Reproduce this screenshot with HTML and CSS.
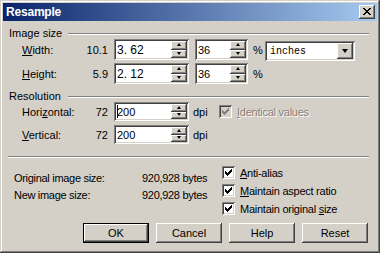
FILE: index.html
```html
<!DOCTYPE html>
<html>
<head>
<meta charset="utf-8">
<title>Resample</title>
<link rel="stylesheet" href="styles.css">
</head>
<body>
<div class="window">
  <div class="titlebar">
    <span class="title">Resample</span>
    <span class="close">
      <svg width="8" height="7" viewBox="0 0 8 7" shape-rendering="crispEdges"><path d="M0 0h2v1h-2z M6 0h2v1h-2z M1 1h2v1h-2z M5 1h2v1h-2z M2 2h4v1h-4z M3 3h2v1h-2z M2 4h4v1h-4z M1 5h2v1h-2z M5 5h2v1h-2z M0 6h2v1h-2z M6 6h2v1h-2z" fill="#000"/></svg>
    </span>
  </div>
  <div class="content">
    <div class="group-head"><span class="gh-text">Image size</span><span class="rule"></span></div>
    <div class="row">
      <span class="lbl"><u>W</u>idth:</span><span class="val">10.1</span>
      <div class="field spin wide"><span class="txt big">3. 62</span><span class="spinbtns"><span class="sb"><span class="arr-up"></span></span><span class="sb"><span class="arr-down"></span></span></span></div>
      <div class="field spin pct"><span class="txt">36</span><span class="spinbtns"><span class="sb"><span class="arr-up"></span></span><span class="sb"><span class="arr-down"></span></span></span></div>
      <span class="unit">%</span>
      <div class="field combo"><span class="txt mono">inches</span><span class="combobtn"><span class="arr-combo"></span></span></div>
    </div>
    <div class="row row2">
      <span class="lbl"><u>H</u>eight:</span><span class="val">5.9</span>
      <div class="field spin wide"><span class="txt big">2. 12</span><span class="spinbtns"><span class="sb"><span class="arr-up"></span></span><span class="sb"><span class="arr-down"></span></span></span></div>
      <div class="field spin pct"><span class="txt">36</span><span class="spinbtns"><span class="sb"><span class="arr-up"></span></span><span class="sb"><span class="arr-down"></span></span></span></div>
      <span class="unit">%</span>
    </div>
    <div class="group-head gh2"><span class="gh-text">Resolution</span><span class="rule"></span></div>
    <div class="row res">
      <span class="lbl">Hori<u>z</u>ontal:</span><span class="val">72</span>
      <div class="field spin wide res-field"><span class="txt"><span class="caret"></span>200</span><span class="spinbtns"><span class="sb"><span class="arr-up"></span></span><span class="sb"><span class="arr-down"></span></span></span></div>
      <span class="dpi">dpi</span>
      <span class="check disabled"><svg width="7" height="7" viewBox="0 0 7 7" shape-rendering="crispEdges"><path d="M0 2h1v3h-1z M1 3h1v3h-1z M2 4h1v3h-1z M3 3h1v3h-1z M4 2h1v3h-1z M5 1h1v3h-1z M6 0h1v3h-1z" fill="#808080"/></svg></span>
      <span class="cblabel dis-text"><u>I</u>dentical values</span>
    </div>
    <div class="row res row4">
      <span class="lbl"><u>V</u>ertical:</span><span class="val">72</span>
      <div class="field spin wide res-field"><span class="txt">200</span><span class="spinbtns"><span class="sb"><span class="arr-up"></span></span><span class="sb"><span class="arr-down"></span></span></span></div>
      <span class="dpi">dpi</span>
    </div>
    <div class="sep"></div>
    <div class="info">
      <div class="info-left">
        <div class="info-line"><span class="info-lbl">Original image size:</span><span>920,928 bytes</span></div>
        <div class="info-line"><span class="info-lbl">New image size:</span><span>920,928 bytes</span></div>
      </div>
      <div class="info-right">
        <div class="cbrow"><span class="check"><svg width="7" height="7" viewBox="0 0 7 7" shape-rendering="crispEdges"><path d="M0 2h1v3h-1z M1 3h1v3h-1z M2 4h1v3h-1z M3 3h1v3h-1z M4 2h1v3h-1z M5 1h1v3h-1z M6 0h1v3h-1z" fill="#000"/></svg></span><span class="cblabel"><u>A</u>nti-alias</span></div>
        <div class="cbrow"><span class="check"><svg width="7" height="7" viewBox="0 0 7 7" shape-rendering="crispEdges"><path d="M0 2h1v3h-1z M1 3h1v3h-1z M2 4h1v3h-1z M3 3h1v3h-1z M4 2h1v3h-1z M5 1h1v3h-1z M6 0h1v3h-1z" fill="#000"/></svg></span><span class="cblabel"><u>M</u>aintain aspect ratio</span></div>
        <div class="cbrow"><span class="check"><svg width="7" height="7" viewBox="0 0 7 7" shape-rendering="crispEdges"><path d="M0 2h1v3h-1z M1 3h1v3h-1z M2 4h1v3h-1z M3 3h1v3h-1z M4 2h1v3h-1z M5 1h1v3h-1z M6 0h1v3h-1z" fill="#000"/></svg></span><span class="cblabel">Maintain original <u>s</u>ize</span></div>
      </div>
    </div>
    <div class="buttons">
      <span class="btn default"><span class="btn-in">OK</span></span>
      <span class="btn"><span class="btn-in">Cancel</span></span>
      <span class="btn"><span class="btn-in">Help</span></span>
      <span class="btn"><span class="btn-in">Reset</span></span>
    </div>
  </div>
</div>
</body>
</html>
```

FILE: styles.css
```css
* { box-sizing: border-box; }
body {
  margin: 0;
  background: #d4d0c8;
  font: 11px "Liberation Sans", Arial, sans-serif;
  color: #000;
}
u { text-decoration: underline; text-underline-offset: 1px; }

.window {
  width: 380px;
  height: 253px;
  padding: 3px;
  background: #d4d0c8;
  box-shadow: inset -1px -1px #404040, inset 1px 1px #d4d0c8, inset -2px -2px #808080, inset 2px 2px #ffffff;
  display: flex;
  flex-direction: column;
}

.titlebar {
  height: 18px;
  flex: none;
  background: linear-gradient(to right, #0a246a, #a6caf0);
  display: flex;
  align-items: center;
  justify-content: space-between;
  padding: 0 2px 0 3px;
}
.title {
  color: #fff;
  font-weight: bold;
  font-size: 12px;
  letter-spacing: -0.2px;
}
.close {
  width: 16px;
  height: 14px;
  background: #d4d0c8;
  box-shadow: inset -1px -1px #404040, inset 1px 1px #ffffff, inset -2px -2px #808080, inset 2px 2px #d4d0c8;
  display: flex;
  align-items: center;
  justify-content: center;
  padding: 0 1px 1px 0;
}
.close svg { display: block; }

.content {
  flex: 1;
  padding: 6px 8px 0 6px;
  display: flex;
  flex-direction: column;
}

.group-head {
  height: 12px;
  display: flex;
  line-height: 12px;
  flex: none;
}
.gh2 { margin-top: 6px; }
.gh-text { width: 59px; flex: none; }
.rule {
  flex: 1;
  height: 2px;
  margin-top: 6px;
  border-top: 1px solid #808080;
  border-bottom: 1px solid #ffffff;
}

.row {
  height: 21px;
  display: flex;
  align-items: center;
  padding-left: 13px;
  flex: none;
}
.row2 { margin-top: 3px; }
.res { height: 19px; }
.row4 { margin-top: 4px; }

.lbl { width: 60px; flex: none; }
.val { width: 26px; flex: none; text-align: right; margin-right: 6px; }

.field {
  background: #fff;
  box-shadow: inset 1px 1px #808080, inset -1px -1px #ffffff, inset 2px 2px #404040, inset -2px -2px #d4d0c8;
  display: flex;
  padding: 2px;
  flex: none;
}
.spin { height: 21px; }
.wide { width: 75px; }
.res-field { height: 19px; }
.pct { width: 53px; margin-left: 6px; }
.txt {
  flex: 1;
  display: flex;
  align-items: center;
  padding-left: 1px;
  white-space: pre;
}
.big { font-size: 12px; }
.mono { font: 10px "Liberation Mono", "Courier New", monospace; padding-left: 3px; }
.caret {
  display: inline-block;
  width: 1px;
  height: 13px;
  background: #000;
  margin-right: -1px;
}

.spinbtns {
  width: 16px;
  display: flex;
  flex-direction: column;
}
.sb {
  flex: 1;
  background: #d4d0c8;
  box-shadow: inset -1px -1px #404040, inset 1px 1px #ffffff, inset -2px -2px #808080;
  display: flex;
  align-items: center;
  justify-content: center;
  padding: 0 1px 1px 0;
}
.arr-up, .arr-down, .arr-combo {
  width: 0;
  height: 0;
  border-left: 2.5px solid transparent;
  border-right: 2.5px solid transparent;
}
.arr-up { border-bottom: 3px solid #000; }
.arr-down { border-top: 3px solid #000; }
.arr-combo {
  border-left-width: 3.5px;
  border-right-width: 3.5px;
  border-top: 4px solid #000;
}

.unit { width: 17px; flex: none; padding-left: 5px; }

.combo {
  width: 90px;
  height: 20px;
  align-self: flex-start;
  margin-top: 2px;
}
.combobtn {
  width: 16px;
  background: #d4d0c8;
  box-shadow: inset -1px -1px #404040, inset 1px 1px #ffffff, inset -2px -2px #808080;
  display: flex;
  align-items: center;
  justify-content: center;
  padding: 0 1px 1px 0;
}

.dpi { width: 30px; flex: none; padding-left: 4px; }

.check {
  width: 13px;
  height: 13px;
  flex: none;
  background: #fff;
  box-shadow: inset 1px 1px #808080, inset -1px -1px #ffffff, inset 2px 2px #404040, inset -2px -2px #d4d0c8;
  display: flex;
  align-items: center;
  justify-content: center;
}
.check svg { display: block; }
.check.disabled { background: #d4d0c8; }
.cblabel { margin-left: 5px; white-space: nowrap; letter-spacing: -0.25px; }
.dis-text { color: #808080; text-shadow: 1px 1px #ffffff; }

.sep {
  margin: 12px 0 0 -1px;
  height: 2px;
  border-top: 1px solid #808080;
  border-bottom: 1px solid #ffffff;
  flex: none;
}

.info {
  height: 65px;
  display: flex;
  padding-left: 5px;
  flex: none;
}
.info-left {
  width: 208px;
  padding-top: 12px;
  letter-spacing: -0.3px;
}
.info-line { height: 17px; line-height: 17px; display: flex; }
.info-lbl { width: 128px; }
.info-right {
  padding-top: 8px;
  display: flex;
  flex-direction: column;
  gap: 5px;
}
.cbrow {
  height: 13px;
  display: flex;
  align-items: center;
}

.buttons {
  display: flex;
  gap: 7px;
  padding-left: 74px;
  flex: none;
}
.btn {
  width: 66px;
  height: 20px;
  background: #d4d0c8;
  box-shadow: inset -1px -1px #404040, inset 1px 1px #ffffff, inset -2px -2px #808080, inset 2px 2px #d4d0c8;
  display: flex;
  align-items: center;
  justify-content: center;
}
.btn.default {
  box-shadow: inset 0 0 0 1px #000, inset -2px -2px #404040, inset 2px 2px #ffffff, inset -3px -3px #808080;
}
```
